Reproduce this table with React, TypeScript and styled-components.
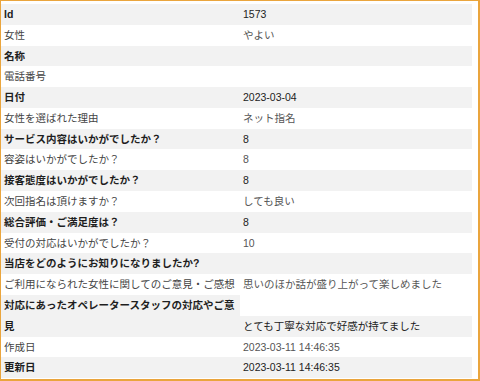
import React from "react";
import styled, {createGlobalStyle} from "styled-components";

const GlobalStyle = createGlobalStyle`
html, body {
margin: 0;
padding: 0;
background: #fff;
}
body {
font-family: "Liberation Sans", "Noto Sans CJK JP", sans-serif;
}
`

const Frame = styled.div`
box-sizing: border-box;
width: 480px;
height: 381px;
border-style: solid;
border-color: #eaa53d;
border-width: 1px 2px 2px 1px;
padding: 3px 6px 0 0;
overflow: hidden;
`

const Row = styled.div`
display: grid;
grid-template-columns: 239px 1fr;
font-size: 10.5px;
line-height: 20.78px;
`

const Label = styled.div<{ $shaded: boolean }>`
padding: 0 4px 0 3px;
background: ${p => p.$shaded ? "#f2f2f2" : "#fff"};
color: ${p => p.$shaded ? "#1e1e1e" : "#444"};
font-weight: ${p => p.$shaded ? 700 : 400};
`

const Value = styled.div<{ $shaded: boolean }>`
align-self: end;
padding: 0 3px 0 3px;
min-height: 20.78px;
background: ${p => p.$shaded ? "#f2f2f2" : "#fff"};
color: ${p => p.$shaded ? "#222" : "#555"};
`

const rows: [string, string][] = [
    ["Id", "1573"],
    ["女性", "やよい"],
    ["名称", ""],
    ["電話番号", ""],
    ["日付", "2023-03-04"],
    ["女性を選ばれた理由", "ネット指名"],
    ["サービス内容はいかがでしたか？", "8"],
    ["容姿はいかがでしたか？", "8"],
    ["接客態度はいかがでしたか？", "8"],
    ["次回指名は頂けますか？", "しても良い"],
    ["総合評価・ご満足度は？", "8"],
    ["受付の対応はいかがでしたか？", "10"],
    ["当店をどのようにお知りになりましたか?", ""],
    ["ご利用になられた女性に関してのご意見・ご感想", "思いのほか話が盛り上がって楽しめました"],
    ["対応にあったオペレータースタッフの対応やご意見", "とても丁寧な対応で好感が持てました"],
    ["作成日", "2023-03-11 14:46:35"],
    ["更新日", "2023-03-11 14:46:35"],
]

function App() {
    return (
        <>
            <GlobalStyle/>
            <Frame>
                {rows.map(([label, value], i) => (
                    <Row key={label}>
                        <Label $shaded={i % 2 === 0}>{label}</Label>
                        <Value $shaded={i % 2 === 0}>{value}</Value>
                    </Row>
                ))}
            </Frame>
        </>
    )
}

export default App
